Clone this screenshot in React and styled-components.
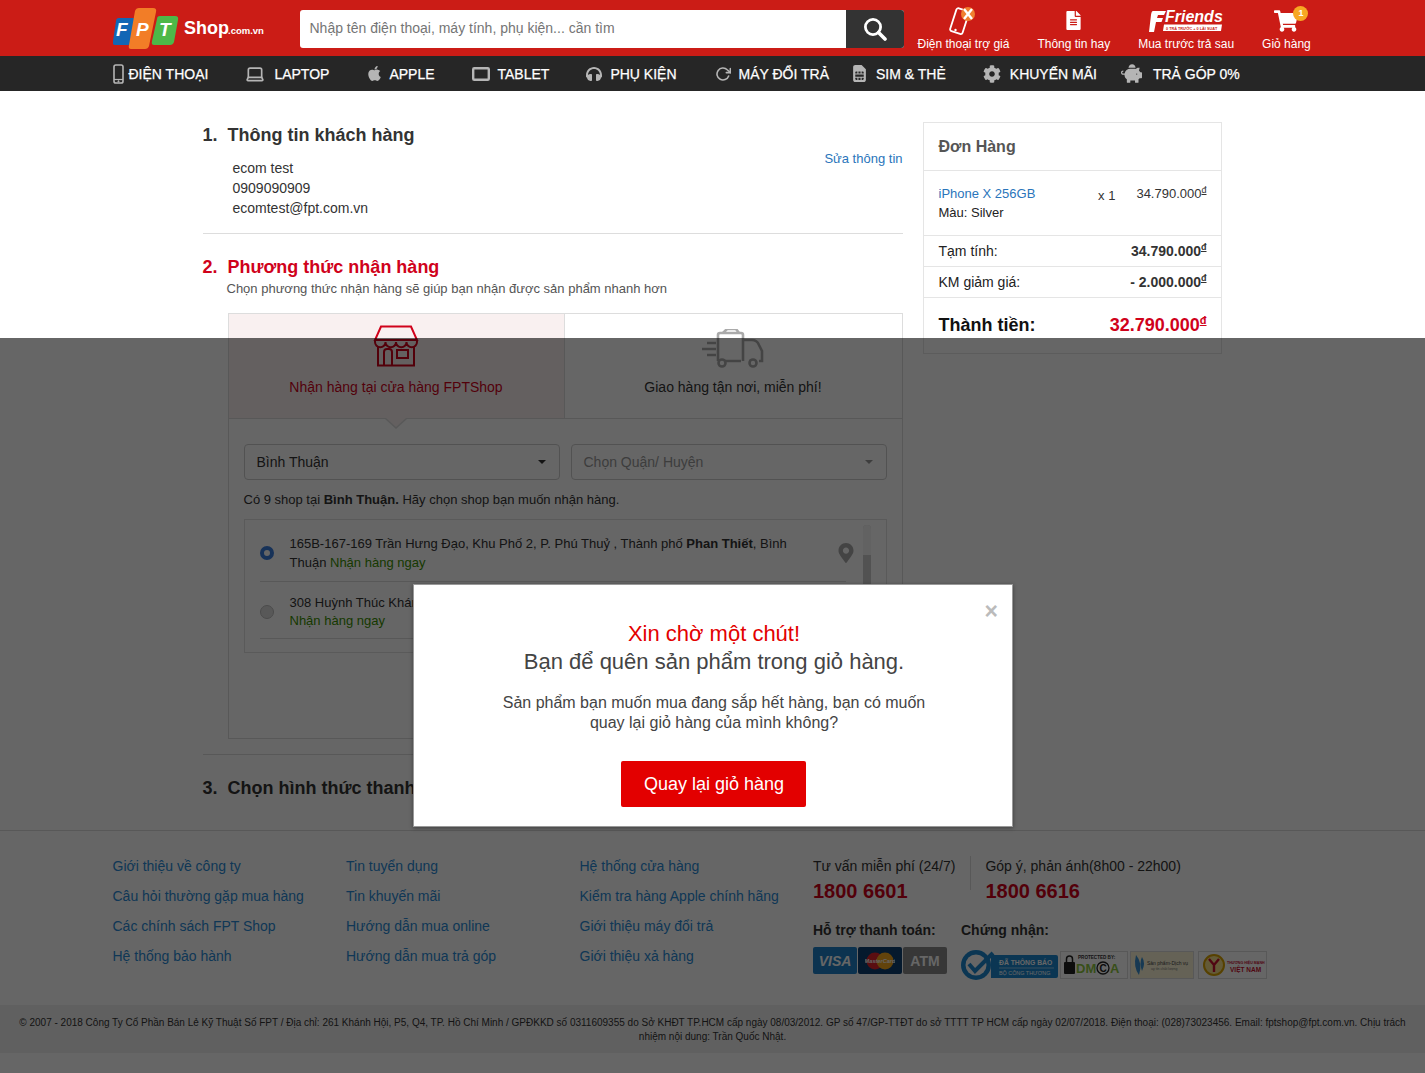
import React from "react";
import styled, { createGlobalStyle } from "styled-components";
import {
  FaApple,
  FaCog,
  FaFileAlt,
  FaHeadphones,
  FaMapMarkerAlt,
  FaPiggyBank,
  FaShoppingCart,
  FaSimCard,
} from "react-icons/fa";
import { FiRotateCw } from "react-icons/fi";
import { Laptop } from "lucide-react";

const GlobalStyle = createGlobalStyle`
  html, body { margin: 0; padding: 0; background: #fff; }
  body { font-family: "Liberation Sans", Arial, sans-serif; color: #333; }
  * { box-sizing: border-box; }
`;

const Page = styled.div`
  position: relative;
  min-height: 1073px;
  overflow: hidden;
`;

const Container = styled.div`
  width: 1200px;
  margin: 0 auto;
  display: flex;
`;

/* top bar */
const TopBar = styled.header`
  height: 56px;
  background: #cb1c16;
`;
const LogoBox = styled.div`
  width: 187px;
  height: 56px;
  display: flex;
  align-items: center;
  flex-shrink: 0;
`;
const SearchBox = styled.div`
  width: 604px;
  height: 38px;
  margin-top: 10px;
  display: flex;
  background: #fff;
  border-radius: 3px;
  overflow: hidden;
  flex-shrink: 0;
`;
const SearchField = styled.div`
  flex: 1;
  padding-left: 10px;
  font-size: 14px;
  line-height: 37px;
  color: #757575;
`;
const SearchButton = styled.div`
  width: 58px;
  background: #333;
  display: flex;
  align-items: center;
  justify-content: center;
`;
const Actions = styled.div`
  display: flex;
  gap: 28px;
  margin-left: 14px;
`;
const Action = styled.div`
  position: relative;
  display: flex;
  flex-direction: column;
  align-items: center;
  padding-top: 6px;
  color: #fff;
  font-size: 12px;
  white-space: nowrap;
`;
const ActionIcon = styled.div`
  position: relative;
  height: 30px;
  padding-bottom: ${(p) => p.$pb ?? 0}px;
  display: flex;
  align-items: center;
  justify-content: center;
`;
const ActionLabel = styled.div`
  line-height: 16px;
`;
const Badge = styled.span`
  position: absolute;
  top: 0;
  right: -10px;
  width: 15px;
  height: 15px;
  border-radius: 50%;
  background: #f7a823;
  color: #fff;
  font-size: 9px;
  font-weight: bold;
  line-height: 15px;
  text-align: center;
`;

/* nav */
const NavBar = styled.nav`
  height: 35px;
  background: #262626;
`;
const NavItem = styled.div`
  display: flex;
  align-items: center;
  height: 35px;
  gap: ${(p) => p.$gap ?? 9}px;
  margin-right: ${(p) => p.$after ?? 37}px;
  color: #fff;
  font-size: 14px;
  -webkit-text-stroke: 0.25px #fff;
  white-space: nowrap;
  svg {
    color: #b5b5b5;
    -webkit-text-stroke: 0;
    flex-shrink: 0;
  }
`;

/* checkout */
const Main = styled.main`
  width: 1200px;
  margin: 0 auto;
  padding: 31px 0 0 90px;
  display: flex;
  gap: 20px;
  align-items: flex-start;
`;
const LeftCol = styled.div`
  width: 700px;
  flex-shrink: 0;
  padding-top: 1px;
`;
const Section = styled.section`
  position: relative;
  padding-bottom: ${(p) => p.$pb ?? 15}px;
  margin-bottom: 21px;
  border-bottom: ${(p) => (p.$plain ? "none" : "1px solid #ddd")};
`;
const Heading = styled.h2`
  margin: 0;
  display: flex;
  gap: 10px;
  font-size: 18px;
  line-height: 24px;
  font-weight: bold;
  white-space: nowrap;
  color: ${(p) => (p.$active ? "#d0021b" : "#333")};
`;
const InfoList = styled.div`
  margin: 11px 0 0 30px;
  font-size: 14px;
  line-height: 20px;
  color: #333;
`;
const EditLink = styled.a`
  position: absolute;
  top: 27px;
  right: 0;
  font-size: 13px;
  line-height: 18px;
  color: #2a75bb;
`;
const SubText = styled.div`
  margin: 1px 0 0 24px;
  font-size: 13px;
  line-height: 18px;
  color: #555;
`;
const MethodBox = styled.div`
  margin: 15px 0 0 25px;
  height: 426px;
  border: 1px solid #ddd;
`;
const Tabs = styled.div`
  display: flex;
  height: 105px;
  border-bottom: 1px solid #ddd;
`;
const Tab = styled.div`
  position: relative;
  flex: ${(p) => (p.$active ? "0 0 336px" : "1")};
  display: flex;
  flex-direction: column;
  align-items: center;
  padding-top: ${(p) => (p.$active ? 11 : 15)}px;
  background: ${(p) => (p.$active ? "#f9f0f0" : "#fff")};
  border-right: ${(p) => (p.$active ? "1px solid #ddd" : "none")};
  color: ${(p) => (p.$active ? "#d0021b" : "#333")};
  font-size: 14px;
`;
const TabIcon = styled.div`
  height: ${(p) => p.$h}px;
  margin-bottom: ${(p) => p.$mb}px;
`;
const TabArrow = styled.span`
  position: absolute;
  left: 156px;
  bottom: -11px;
  width: 0;
  height: 0;
  border-left: 11px solid transparent;
  border-right: 11px solid transparent;
  border-top: 10px solid #ddd;
  &::after {
    content: "";
    position: absolute;
    left: -10px;
    top: -11px;
    border-left: 10px solid transparent;
    border-right: 10px solid transparent;
    border-top: 9px solid #f9f0f0;
  }
`;
const Panel = styled.div`
  padding: 25px 15px 0;
`;
const Selects = styled.div`
  display: flex;
  gap: 11px;
`;
const Select = styled.div`
  flex: 0 0 316px;
  height: 36px;
  padding: 0 13px 0 12px;
  display: flex;
  align-items: center;
  justify-content: space-between;
  border: 1px solid #ccc;
  border-radius: 4px;
  font-size: 14px;
  color: ${(p) => (p.$muted ? "#999" : "#333")};
  &::after {
    content: "";
    border-left: 4px solid transparent;
    border-right: 4px solid transparent;
    border-top: 4px solid ${(p) => (p.$muted ? "#999" : "#333")};
  }
`;
const Note = styled.div`
  margin-top: 11px;
  font-size: 13px;
  line-height: 18px;
`;
const ShopList = styled.div`
  position: relative;
  margin-top: 10px;
  height: 134px;
  padding: 0 40px 0 15px;
  border: 1px solid #e2e2e2;
  overflow: hidden;
`;
const ShopItem = styled.div`
  display: flex;
  align-items: center;
  gap: 16px;
  padding: ${(p) => (p.$tight ? "12px 0 8px" : "14px 0 9px")};
  line-height: ${(p) => (p.$tight ? 18 : 19)}px;
  border-bottom: 1px solid #ddd;
`;
const Radio = styled.span`
  flex-shrink: 0;
  width: 14px;
  height: 14px;
  border-radius: 50%;
  background: ${(p) => (p.$on ? "#fff" : "#ddd")};
  border: ${(p) => (p.$on ? "4px solid #3b7ddd" : "1px solid #bbb")};
`;
const ShopText = styled.div`
  width: 505px;
  font-size: 13px;
  color: #333;
`;
const Ready = styled.span`
  color: #3a8f00;
`;
const PinBox = styled.div`
  margin-left: auto;
  margin-right: -10px;
  color: #aaa;
  font-size: 20px;
  display: flex;
`;
const ScrollTrack = styled.div`
  position: absolute;
  top: 5px;
  right: 15px;
  bottom: 0;
  width: 8px;
  background: #ccc;
  border-radius: 4px;
  &::before {
    content: "";
    display: block;
    height: 30px;
    background: #f6f6f6;
    border-radius: 4px 4px 0 0;
  }
`;

/* order card */
const OrderCard = styled.aside`
  width: 299px;
  height: 232px;
  flex-shrink: 0;
  border: 1px solid #e5e5e5;
`;
const OrderTitle = styled.div`
  height: 48px;
  padding-left: 15px;
  font-size: 16px;
  font-weight: bold;
  line-height: 47px;
  color: #555;
  border-bottom: 1px solid #e5e5e5;
`;
const OrderItem = styled.div`
  display: flex;
  height: 65px;
  padding: 13px 14px 0 15px;
  font-size: 13px;
  line-height: 19px;
  border-bottom: 1px solid #e5e5e5;
`;
const ItemInfo = styled.div`
  flex: 1;
  color: #222;
`;
const ItemName = styled.a`
  display: block;
  color: #2a75bb;
`;
const ItemQty = styled.div`
  margin: 2px 21px 0 0;
`;
const TotalRow = styled.div`
  display: flex;
  justify-content: space-between;
  align-items: center;
  height: ${(p) => (p.$grand ? 54 : 31)}px;
  padding: 0 14px 0 15px;
  font-size: ${(p) => (p.$grand ? 18 : 14)}px;
  color: #222;
  border-bottom: ${(p) => (p.$grand ? "none" : "1px solid #e5e5e5")};
  ${(p) => p.$grand && "font-weight: bold; color: #111;"}
`;
const Amount = styled.span`
  font-weight: bold;
  color: ${(p) => (p.$red ? "#d0021b" : "#333")};
`;
const Dong = styled.sup`
  font-size: ${(p) => (p.$big ? 11 : 9)}px;
  text-decoration: underline;
  line-height: 0;
  font-weight: ${(p) => (p.$light ? "normal" : "bold")};
`;

/* footer */
const Footer = styled.footer`
  margin-top: 9px;
  border-top: 1px solid #ddd;
`;
const FooterInner = styled.div`
  width: 1200px;
  height: 140px;
  margin: 0 auto;
  padding-top: 20px;
  display: flex;
`;
const LinkCol = styled.div`
  width: 233.5px;
  flex-shrink: 0;
`;
const FooterLink = styled.a`
  display: block;
  font-size: 14px;
  line-height: 30px;
  color: #288ad6;
  white-space: nowrap;
`;
const HelpCol = styled.div`
  padding-top: 5px;
`;
const Hotlines = styled.div`
  display: flex;
`;
const Hotline = styled.div`
  font-size: 14px;
  line-height: 20px;
  color: #333;
  white-space: nowrap;
  ${(p) => p.$split && "border-left: 1px solid #ddd; margin-left: 15px; padding-left: 14px; height: 34px;"}
`;
const Phone = styled.div`
  font-size: 20px;
  font-weight: bold;
  line-height: 30px;
  color: #d0021b;
`;
const Supports = styled.div`
  display: flex;
  gap: 14px;
  margin-top: 14px;
`;
const SupportTitle = styled.div`
  font-size: 14px;
  font-weight: bold;
  line-height: 20px;
  color: #333;
  margin-bottom: ${(p) => p.$mb}px;
`;
const Logos = styled.div`
  display: flex;
  align-items: center;
  gap: ${(p) => p.$gap}px;
`;
const PayCard = styled.div`
  width: 44px;
  height: 27px;
  border-radius: 2px;
  display: flex;
  align-items: center;
  justify-content: center;
  background: ${(p) => p.$bg};
  color: #fff;
  font-size: 14px;
  font-weight: bold;
  font-style: ${(p) => (p.$italic ? "italic" : "normal")};
`;
const CertCard = styled.div`
  width: ${(p) => p.$w}px;
  height: 28px;
  margin-left: ${(p) => p.$ml ?? 0}px;
  border: 1px solid #ddd;
  background: ${(p) => p.$bg || "#fff"};
  display: flex;
  align-items: center;
  justify-content: center;
`;
const LegalBand = styled.div`
  margin-top: 34px;
  height: 48px;
  padding: 11px 15px 0;
  background: #f1f1f1;
  font-size: 10px;
  line-height: 14px;
  text-align: center;
  color: #333;
`;

/* popup */
const Overlay = styled.div`
  position: absolute;
  top: 338px;
  left: 0;
  right: 0;
  bottom: 0;
  background: rgba(0, 0, 0, 0.6);
`;
const Modal = styled.div`
  position: absolute;
  top: 246px;
  left: 413px;
  width: 600px;
  height: 243px;
  background: #fff;
  border: 1px solid #999;
  box-shadow: 0 1px 4px rgba(0, 0, 0, 0.4);
  padding-top: 35px;
  text-align: center;
`;
const CloseBtn = styled.span`
  position: absolute;
  top: 12px;
  right: 14px;
  font-size: 23px;
  font-weight: bold;
  line-height: 28px;
  color: #bbb;
`;
const ModalTitle = styled.div`
  padding-left: 2px;
  font-size: 22px;
  line-height: 28px;
  color: ${(p) => (p.$red ? "#e30000" : "#444")};
`;
const ModalBody = styled.div`
  margin-top: 17px;
  padding-left: 2px;
  font-size: 16px;
  line-height: 20px;
  color: #444;
`;
const BackButton = styled.button`
  display: block;
  margin: 28px auto 0;
  width: 185px;
  height: 46px;
  padding: 0 0 0 2px;
  border: none;
  border-radius: 2px;
  background: #e30000;
  color: #fff;
  font-family: inherit;
  font-size: 18px;
`;

function FptLogo() {
  return (
    <svg width="152" height="42" viewBox="0 0 152 42">
      <path d="M6 11 h14 q4 0 3 4 l-4 20 q-1 3 -4 3 H2 q-3 0 -2 -4 l3 -20 q0 -3 3 -3z" fill="#1266b5" />
      <path d="M26 1 h14 q4 0 3 4 l-7 34 q-1 3 -4 3 H18 q-3 0 -2 -4 l6 -34 q1 -3 4 -3z" fill="#f27d27" />
      <path d="M47 9 h15 q4 0 3 4 l-4 22 q-1 3 -4 3 H41 q-3 0 -2 -4 l5 -22 q0 -3 3 -3z" fill="#4db848" />
      <text x="3" y="29" fontFamily="Liberation Sans" fontSize="19" fontWeight="bold" fontStyle="italic" fill="#fff">F</text>
      <text x="23" y="29" fontFamily="Liberation Sans" fontSize="19" fontWeight="bold" fontStyle="italic" fill="#fff">P</text>
      <text x="46" y="29" fontFamily="Liberation Sans" fontSize="19" fontWeight="bold" fontStyle="italic" fill="#fff">T</text>
      <text x="71" y="27" fontFamily="Liberation Sans" fontSize="18" fontWeight="bold" fill="#fff">Shop</text>
      <text x="115" y="27" fontFamily="Liberation Sans" fontSize="9.5" fontWeight="bold" fill="#fff">.com.vn</text>
    </svg>
  );
}

function SearchGlyph() {
  return (
    <svg width="24" height="24" viewBox="0 0 24 24" fill="none" stroke="#fff">
      <circle cx="10" cy="10" r="7.6" strokeWidth="2.8" />
      <path d="M15.5 15.5 L22 22" strokeWidth="3.6" strokeLinecap="round" />
    </svg>
  );
}

function SubsidyIcon() {
  return (
    <svg width="34" height="30" viewBox="0 0 34 30">
      <rect x="7" y="3" width="13" height="24" rx="2" transform="rotate(18 13 15)" fill="none" stroke="#fff" strokeWidth="1.8" />
      <circle cx="9.5" cy="24" r="1.2" fill="#fff" />
      <circle cx="22" cy="8" r="7" fill="#f08030" />
      <path d="M18 3 L26 13 M26 3 L18 13" stroke="#fff" strokeWidth="2.4" />
    </svg>
  );
}

function FriendsLogo() {
  return (
    <svg width="76" height="26" viewBox="0 0 76 26">
      <path d="M5 3 H18 L16 7 H10 L9 10 H15 L13.5 14 H8 L6 24 H1 L3 7 Q3.5 3 5 3z" fill="#fff" />
      <text x="17" y="14" fontFamily="Liberation Sans" fontSize="16" fontWeight="bold" fontStyle="italic" fill="#fff">Friends</text>
      <path d="M16 16.5 H74 L73 23 H15z" fill="#fff" />
      <text x="18" y="22" fontFamily="Liberation Sans" fontSize="3.8" fontWeight="bold" fill="#cb1c16">0 TRẢ TRƯỚC + 0 LÃI SUẤT</text>
    </svg>
  );
}

function PhoneGlyph() {
  return (
    <svg width="11" height="20" viewBox="0 0 11 20" fill="none" stroke="currentColor">
      <rect x="1" y="1" width="9" height="18" rx="1.8" strokeWidth="1.6" />
      <path d="M1 15.5 H10" strokeWidth="1.2" />
      <circle cx="5.5" cy="17.3" r="0.6" fill="currentColor" />
    </svg>
  );
}

function TabletGlyph() {
  return (
    <svg width="18" height="14" viewBox="0 0 18 14" fill="none" stroke="currentColor">
      <rect x="1.2" y="1.2" width="15.6" height="11.6" rx="1" strokeWidth="2.4" />
    </svg>
  );
}

function StoreIcon() {
  return (
    <svg width="46" height="42" viewBox="0 0 46 42" fill="none" stroke="#d0021b" strokeWidth="2">
      <path d="M8 1.5 H38 L44 15 H2z" />
      <path d="M2 15 v2 a5.25 5.25 0 0 0 10.5 0 a5.25 5.25 0 0 0 10.5 0 a5.25 5.25 0 0 0 10.5 0 a5.25 5.25 0 0 0 10.5 0 v-2" />
      <path d="M5 21 V40.5 H41 V21" />
      <path d="M11 40 V27 a3 3 0 0 1 3 -3 h2 a3 3 0 0 1 3 3 V40" />
      <rect x="24" y="25" width="11" height="8" />
    </svg>
  );
}

function TruckIcon() {
  return (
    <svg width="64" height="40" viewBox="0 0 64 40" fill="none" stroke="#aaa" strokeWidth="2.6">
      <path d="M17 32 V6 q0 -2 2 -2 h21 q2 0 2 2 V32" />
      <path d="M42 11 h9 q5 0 7 5 l3 6 v10 h-3" />
      <path d="M24 32 H40 M48 32 h2 M17 32 h1" />
      <path d="M22 4 L26 0 H35 L38 4" />
      <circle cx="21" cy="34" r="3.5" />
      <circle cx="52" cy="34" r="3.5" />
      <path d="M6 14 H15 M1 20 H15 M6 26 H15" strokeWidth="2.4" />
    </svg>
  );
}

function BctSeal() {
  return (
    <svg width="97" height="30" viewBox="0 0 97 30">
      <path d="M30 5 H95 q2 0 2 2 V26 q0 2 -2 2 H30z" fill="#1c88d0" />
      <circle cx="15" cy="15" r="15" fill="#1c88d0" />
      <circle cx="15" cy="15" r="10.5" fill="#fff" />
      <path d="M8 14 L14 21 L32 3" fill="none" stroke="#1c88d0" strokeWidth="4" />
      <text x="38" y="15" fontFamily="Liberation Sans" fontSize="6.8" fontWeight="bold" fill="#fff">ĐÃ THÔNG BÁO</text>
      <path d="M38 18 H93" stroke="#fff" strokeWidth="0.5" />
      <text x="38" y="25" fontFamily="Liberation Sans" fontSize="5.4" fill="#fff">BỘ CÔNG THƯƠNG</text>
    </svg>
  );
}

function DmcaSeal() {
  return (
    <svg width="62" height="24" viewBox="0 0 62 24">
      <text x="15" y="6" fontFamily="Liberation Sans" fontSize="4.6" fontWeight="bold" fill="#333">PROTECTED BY:</text>
      <rect x="1" y="9" width="11" height="12" rx="1" fill="#222" />
      <path d="M3.5 9 V6 a3 3 0 0 1 6 0 V9" fill="none" stroke="#222" strokeWidth="1.5" />
      <text x="13" y="20" fontFamily="Liberation Sans" fontSize="13" fontWeight="bold" fill="#8cc63f">DM</text>
      <circle cx="40" cy="15" r="6" fill="none" stroke="#222" strokeWidth="1.3" />
      <text x="36.5" y="19" fontFamily="Liberation Sans" fontSize="10" fontWeight="bold" fill="#222">C</text>
      <text x="47" y="20" fontFamily="Liberation Sans" fontSize="13" fontWeight="bold" fill="#8cc63f">A</text>
    </svg>
  );
}

function QualitySeal() {
  return (
    <svg width="60" height="24" viewBox="0 0 60 24">
      <path d="M4 2 Q11 10 7 22 Q1 14 4 2z" fill="#3a8fd0" />
      <path d="M10 4 Q14 10 10 18 Q7 10 10 4z" fill="#3a8fd0" />
      <text x="15" y="12" fontFamily="Liberation Sans" fontSize="5" fill="#444">Sản phẩm-Dịch vụ</text>
      <text x="19" y="17" fontFamily="Liberation Sans" fontSize="3.5" fill="#777">uy tín chất lượng</text>
    </svg>
  );
}

function VietBrandSeal() {
  return (
    <svg width="64" height="24" viewBox="0 0 64 24">
      <circle cx="13" cy="12" r="10" fill="#f7e08a" stroke="#d9a300" strokeWidth="2" />
      <path d="M8 6 L13 12 L18 6 M13 12 V19" fill="none" stroke="#c8102e" strokeWidth="2.4" />
      <text x="26" y="11" fontFamily="Liberation Sans" fontSize="3.6" fontWeight="bold" fill="#c8102e">THƯƠNG HIỆU MẠNH</text>
      <text x="29" y="19" fontFamily="Liberation Sans" fontSize="6.5" fontWeight="bold" fill="#c8102e">VIỆT NAM</text>
    </svg>
  );
}

const navItems = [
  { label: "ĐIỆN THOẠI", icon: <PhoneGlyph />, gap: 5 },
  { label: "LAPTOP", icon: <Laptop size={20} /> },
  { label: "APPLE", icon: <FaApple size={17} />, gap: 6 },
  { label: "TABLET", icon: <TabletGlyph />, gap: 8 },
  { label: "PHỤ KIỆN", icon: <FaHeadphones size={16} />, gap: 8, after: 38 },
  { label: "MÁY ĐỔI TRẢ", icon: <FiRotateCw size={16} strokeWidth={2.4} />, gap: 8, after: 22 },
  { label: "SIM & THẺ", icon: <FaSimCard size={17} />, gap: 8 },
  { label: "KHUYẾN MÃI", icon: <FaCog size={18} />, gap: 9, after: 24 },
  { label: "TRẢ GÓP 0%", icon: <FaPiggyBank size={21} />, gap: 11 },
];

const footerLinks = [
  ["Giới thiệu về công ty", "Câu hỏi thường gặp mua hàng", "Các chính sách FPT Shop", "Hệ thống bảo hành"],
  ["Tin tuyển dụng", "Tin khuyến mãi", "Hướng dẫn mua online", "Hướng dẫn mua trả góp"],
  ["Hệ thống cửa hàng", "Kiểm tra hàng Apple chính hãng", "Giới thiệu máy đổi trả", "Giới thiệu xả hàng"],
];

export default function App() {
  return (
    <Page>
      <GlobalStyle />
      <TopBar>
        <Container>
          <LogoBox>
            <FptLogo />
          </LogoBox>
          <SearchBox>
            <SearchField>Nhập tên điện thoại, máy tính, phụ kiện... cần tìm</SearchField>
            <SearchButton>
              <SearchGlyph />
            </SearchButton>
          </SearchBox>
          <Actions>
            <Action>
              <ActionIcon>
                <SubsidyIcon />
              </ActionIcon>
              <ActionLabel>Điện thoại trợ giá</ActionLabel>
            </Action>
            <Action>
              <ActionIcon $pb={2}>
                <FaFileAlt size={19} />
              </ActionIcon>
              <ActionLabel>Thông tin hay</ActionLabel>
            </Action>
            <Action>
              <ActionIcon>
                <FriendsLogo />
              </ActionIcon>
              <ActionLabel>Mua trước trả sau</ActionLabel>
            </Action>
            <Action>
              <ActionIcon>
                <FaShoppingCart size={24} />
                <Badge>1</Badge>
              </ActionIcon>
              <ActionLabel>Giỏ hàng</ActionLabel>
            </Action>
          </Actions>
        </Container>
      </TopBar>
      <NavBar>
        <Container>
          {navItems.map((item) => (
            <NavItem key={item.label} $gap={item.gap} $after={item.after}>
              {item.icon}
              {item.label}
            </NavItem>
          ))}
        </Container>
      </NavBar>

      <Main>
        <LeftCol>
          <Section>
            <Heading>
              <span>1.</span>
              <span>Thông tin khách hàng</span>
            </Heading>
            <EditLink>Sửa thông tin</EditLink>
            <InfoList>
              <div>ecom test</div>
              <div>0909090909</div>
              <div>ecomtest@fpt.com.vn</div>
            </InfoList>
          </Section>
          <Section>
            <Heading $active>
              <span>2.</span>
              <span>Phương thức nhận hàng</span>
            </Heading>
            <SubText>Chọn phương thức nhận hàng sẽ giúp bạn nhận được sản phẩm nhanh hơn</SubText>
            <MethodBox>
              <Tabs>
                <Tab $active>
                  <TabIcon $h={42} $mb={12}>
                    <StoreIcon />
                  </TabIcon>
                  Nhận hàng tại cửa hàng FPTShop
                  <TabArrow />
                </Tab>
                <Tab>
                  <TabIcon $h={40} $mb={10}>
                    <TruckIcon />
                  </TabIcon>
                  Giao hàng tận nơi, miễn phí!
                </Tab>
              </Tabs>
              <Panel>
                <Selects>
                  <Select>Bình Thuận</Select>
                  <Select $muted>Chọn Quận/ Huyện</Select>
                </Selects>
                <Note>
                  Có 9 shop tại <b>Bình Thuận.</b> Hãy chọn shop bạn muốn nhận hàng.
                </Note>
                <ShopList>
                  <ShopItem>
                    <Radio $on />
                    <ShopText>
                      165B-167-169 Trần Hưng Đạo, Khu Phố 2, P. Phú Thuỷ , Thành phố <b>Phan Thiết</b>, Bình Thuận{" "}
                      <Ready>Nhận hàng ngay</Ready>
                    </ShopText>
                    <PinBox>
                      <FaMapMarkerAlt />
                    </PinBox>
                  </ShopItem>
                  <ShopItem $tight>
                    <Radio />
                    <ShopText>
                      308 Huỳnh Thúc Kháng, Thành phố Phan Thiết
                      <br />
                      <Ready>Nhận hàng ngay</Ready>
                    </ShopText>
                  </ShopItem>
                  <ScrollTrack />
                </ShopList>
              </Panel>
            </MethodBox>
          </Section>
          <Section $plain $pb={0}>
            <Heading>
              <span>3.</span>
              <span>Chọn hình thức thanh toán</span>
            </Heading>
          </Section>
        </LeftCol>

        <OrderCard>
          <OrderTitle>Đơn Hàng</OrderTitle>
          <OrderItem>
            <ItemInfo>
              <ItemName>iPhone X 256GB</ItemName>
              Màu: Silver
            </ItemInfo>
            <ItemQty>x 1</ItemQty>
            <div>
              34.790.000<Dong $light>đ</Dong>
            </div>
          </OrderItem>
          <TotalRow>
            Tạm tính:
            <Amount>
              34.790.000<Dong>đ</Dong>
            </Amount>
          </TotalRow>
          <TotalRow>
            KM giảm giá:
            <Amount>
              - 2.000.000<Dong>đ</Dong>
            </Amount>
          </TotalRow>
          <TotalRow $grand>
            Thành tiền:
            <Amount $red>
              32.790.000<Dong $big>đ</Dong>
            </Amount>
          </TotalRow>
        </OrderCard>
      </Main>

      <Footer>
        <FooterInner>
          {footerLinks.map((col) => (
            <LinkCol key={col[0]}>
              {col.map((link) => (
                <FooterLink key={link}>{link}</FooterLink>
              ))}
            </LinkCol>
          ))}
          <HelpCol>
            <Hotlines>
              <Hotline>
                Tư vấn miễn phí (24/7)
                <Phone>1800 6601</Phone>
              </Hotline>
              <Hotline $split>
                Góp ý, phản ánh(8h00 - 22h00)
                <Phone>1800 6616</Phone>
              </Hotline>
            </Hotlines>
            <Supports>
              <div>
                <SupportTitle $mb={7}>Hỗ trợ thanh toán:</SupportTitle>
                <Logos $gap={1}>
                  <PayCard $bg="#1e80c8" $italic>
                    VISA
                  </PayCard>
                  <PayCard $bg="#0d3f70">
                    <svg width="30" height="18" viewBox="0 0 30 18">
                      <circle cx="10" cy="9" r="8.5" fill="#e0232b" />
                      <circle cx="20" cy="9" r="8.5" fill="#f5a81c" />
                      <text x="15" y="11" textAnchor="middle" fontFamily="Liberation Sans" fontSize="5.6" fontStyle="italic" fill="#fff">MasterCard</text>
                    </svg>
                  </PayCard>
                  <PayCard $bg="#8a8a8a">ATM</PayCard>
                </Logos>
              </div>
              <div>
                <SupportTitle $mb={10}>Chứng nhận:</SupportTitle>
                <Logos $gap={2}>
                  <BctSeal />
                  <CertCard $w={68}>
                    <DmcaSeal />
                  </CertCard>
                  <CertCard $w={64} $bg="#fdf6d8">
                    <QualitySeal />
                  </CertCard>
                  <CertCard $w={69} $ml={2}>
                    <VietBrandSeal />
                  </CertCard>
                </Logos>
              </div>
            </Supports>
          </HelpCol>
        </FooterInner>
        <LegalBand>
          © 2007 - 2018 Công Ty Cổ Phần Bán Lẻ Kỹ Thuật Số FPT / Địa chỉ: 261 Khánh Hội, P5, Q4, TP. Hồ Chí Minh / GPĐKKD số 0311609355 do Sở KHĐT TP.HCM cấp ngày 08/03/2012. GP số 47/GP-TTĐT do sở TTTT TP HCM cấp ngày 02/07/2018. Điện thoại: (028)73023456. Email: fptshop@fpt.com.vn. Chịu trách nhiệm nội dung: Trần Quốc Nhật.
        </LegalBand>
      </Footer>

      <Overlay>
        <Modal>
          <CloseBtn>×</CloseBtn>
          <ModalTitle $red>Xin chờ một chút!</ModalTitle>
          <ModalTitle>Bạn để quên sản phẩm trong giỏ hàng.</ModalTitle>
          <ModalBody>
            Sản phẩm bạn muốn mua đang sắp hết hàng, bạn có muốn
            <br />
            quay lại giỏ hàng của mình không?
          </ModalBody>
          <BackButton>Quay lại giỏ hàng</BackButton>
        </Modal>
      </Overlay>
    </Page>
  );
}
